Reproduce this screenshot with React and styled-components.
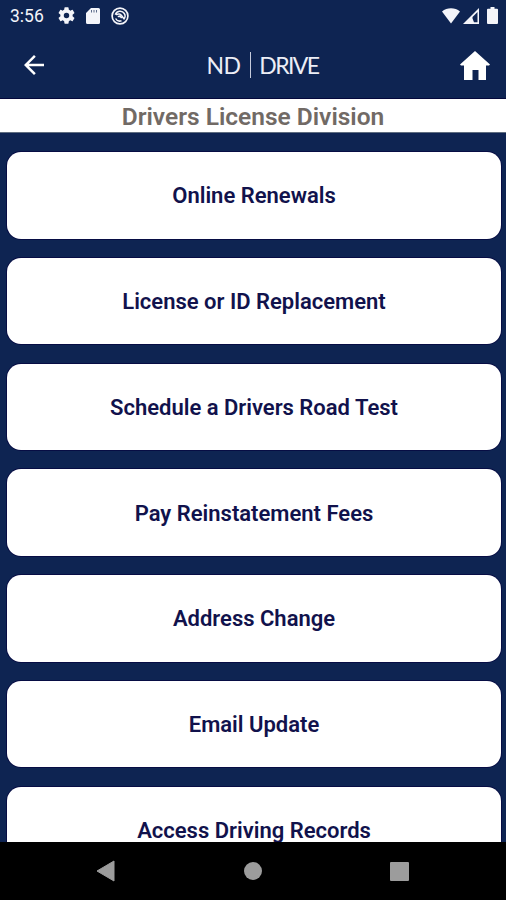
import React from 'react';
import styled, { createGlobalStyle } from 'styled-components';

const navy = '#0e2452';

const GlobalStyle = createGlobalStyle`
  body {
    margin: 0;
    background: #000;
  }
`;

const Screen = styled.div`
  display: flex;
  flex-direction: column;
  height: 900px;
  overflow: hidden;
  background: ${navy};
  font-family: Roboto, sans-serif;
`;

const StatusBar = styled.div`
  display: flex;
  align-items: center;
  flex: none;
  box-sizing: border-box;
  height: 31px;
  padding: 0 8px 0 10px;
  color: #f4f5fa;
`;

const Clock = styled.span`
  width: 48px;
  padding-top: 2px;
  font-size: 17.5px;
  line-height: 29px;
`;

const StatusIcons = styled.div`
  display: flex;
  align-items: center;
  gap: 11px;
`;

const SignalIcons = styled(StatusIcons)`
  gap: 3px;
  margin-left: auto;
`;

const Icon = styled.svg`
  display: block;
  flex: none;
  fill: currentColor;
`;

const BatteryIcon = styled(Icon)`
  margin-left: 5px;
`;

const Header = styled.header`
  display: grid;
  grid-template-columns: 1fr auto 1fr;
  align-items: center;
  flex: none;
  box-sizing: border-box;
  height: 67px;
  padding: 0 16px 0 24px;
  color: #fff;
`;

const HeaderButton = styled.button`
  justify-self: ${props => props.$side};
  padding: 0;
  border: 0;
  background: none;
  color: #fff;
`;

const HomeButton = styled(HeaderButton)`
  padding-top: 2px;
`;

const Brand = styled.div`
  display: flex;
  align-items: center;
  padding-left: 11px;
  color: #eceef6;
  font-family: Lato, sans-serif;
  font-size: 23px;
  line-height: 30px;
  letter-spacing: -0.6px;
`;

const BrandRule = styled.span`
  width: 1px;
  height: 26px;
  margin: 0 8px 0 10px;
  background: #c5cadb;
`;

const BrandName = styled.span`
  letter-spacing: -1.6px;
`;

const PageTitle = styled.h1`
  flex: none;
  box-sizing: border-box;
  height: 35px;
  margin: 0;
  border-top: 1px solid #04083c;
  border-bottom: 1px solid #5f6d80;
  background: #fff;
  color: #716a65;
  font-size: 24.5px;
  font-weight: 600;
  line-height: 36px;
  text-align: center;
`;

const Menu = styled.main`
  display: flex;
  flex-direction: column;
  flex: 1;
  gap: 19.3px;
  min-height: 0;
  padding: 19px 5px 0 7px;
  overflow: hidden;
`;

const MenuButton = styled.button`
  flex: none;
  box-sizing: border-box;
  height: 86.5px;
  padding: 2px 0 0;
  border: 0;
  border-radius: 14px;
  background: #fff;
  box-shadow: 0 0 0 1px #070d44;
  color: #11124c;
  font-family: inherit;
  font-size: 22px;
  font-weight: 600;
  line-height: 30px;
`;

const NavBar = styled.nav`
  display: flex;
  align-items: center;
  justify-content: space-between;
  flex: none;
  box-sizing: border-box;
  height: 58px;
  padding: 0 97px 0 96px;
  background: #000;
  color: #9c9c9c;
`;

const items = [
  'Online Renewals',
  'License or ID Replacement',
  'Schedule a Drivers Road Test',
  'Pay Reinstatement Fees',
  'Address Change',
  'Email Update',
  'Access Driving Records',
];

const App = () => (
  <Screen>
    <GlobalStyle />
    <StatusBar>
      <Clock>3:56</Clock>
      <StatusIcons>
        <Icon width="17" height="17" viewBox="2 2 20 20">
          <path d="M19.14 12.94c.04-.3.06-.61.06-.94s-.02-.64-.07-.94l2.03-1.58a.49.49 0 0 0 .12-.61l-1.92-3.32a.49.49 0 0 0-.59-.22l-2.39.96a7 7 0 0 0-1.62-.94l-.36-2.54a.48.48 0 0 0-.48-.41h-3.84a.48.48 0 0 0-.47.41l-.36 2.54a7.3 7.3 0 0 0-1.62.94l-2.39-.96a.48.48 0 0 0-.59.22L2.74 8.87a.48.48 0 0 0 .12.61l2.03 1.58a6 6 0 0 0-.02 1.88l-2.03 1.58a.49.49 0 0 0-.12.61l1.92 3.32c.12.22.37.29.59.22l2.39-.96c.5.38 1.03.7 1.62.94l.36 2.54c.05.24.24.41.48.41h3.84c.24 0 .44-.17.47-.41l.36-2.54a7 7 0 0 0 1.62-.94l2.39.96c.22.08.47 0 .59-.22l1.92-3.32a.48.48 0 0 0-.12-.61zM12 15.2a3.2 3.2 0 1 1 0-6.4 3.2 3.2 0 0 1 0 6.4z" />
        </Icon>
        <Icon width="14" height="16" viewBox="0 0 14 16">
          <path d="M5 0h7.5A1.5 1.5 0 0 1 14 1.5v13a1.5 1.5 0 0 1-1.5 1.5h-11A1.5 1.5 0 0 1 0 14.5V5z" />
          <path d="M5.5 2v2.5M8 2v2.5M10.5 2v2.5" stroke={navy} strokeOpacity="0.65" />
        </Icon>
        <Icon width="18" height="18" viewBox="0 0 18 18">
          <circle cx="9" cy="9" r="7.9" fill="none" stroke="currentColor" strokeWidth="1.7" />
          <path
            d="M4.3 7.8C5.5 3.8 11 2.9 13.3 6.5c1.2 2 .7 4.5-.7 6M4.6 11.5c1.2 2.3 3.700 3 5.900 2.3M5.2 7.8c2.5-1.5 4.5-.8 5.5 1l2.200 3"
            fill="none"
            stroke="currentColor"
            strokeWidth="1.5"
          />
          <path d="M6.5 9l3-1 2 2.8-1.500.8-1-1.300H7z" />
        </Icon>
      </StatusIcons>
      <SignalIcons>
        <Icon width="18" height="16" viewBox="0 0 18 16">
          <path d="M0 3.5C5-.9 13-.9 18 3.5L9 15.5z" />
        </Icon>
        <Icon width="16" height="16" viewBox="0 0 16 16">
          <path fillRule="evenodd" d="M16 0v16H0zM14.5 4l-5 5v1.5l1.5 3.700h3.5z" />
        </Icon>
        <BatteryIcon width="11" height="17" viewBox="0 0 11 17">
          <path d="M3.5 0h4v1.7H10a1 1 0 0 1 1 1V16a1 1 0 0 1-1 1H1a1 1 0 0 1-1-1V2.7a1 1 0 0 1 1-1h2.5z" />
        </BatteryIcon>
      </SignalIcons>
    </StatusBar>
    <Header>
      <HeaderButton $side="start" aria-label="Back">
        <Icon width="20" height="20" viewBox="4 4 16 16">
          <path d="M20 11H7.83l5.59-5.59L12 4l-8 8 8 8 1.41-1.41L7.83 13H20z" />
        </Icon>
      </HeaderButton>
      <Brand>
        ND
        <BrandRule />
        <BrandName>DRIVE</BrandName>
      </Brand>
      <HomeButton $side="end" aria-label="Home">
        <Icon width="30" height="29" viewBox="0 0 30 29">
          <path d="M15 0l15 13.5-1 1h-3V29h-7.5V19h-6v10H4V14.5H1l-1-1z" />
        </Icon>
      </HomeButton>
    </Header>
    <PageTitle>Drivers License Division</PageTitle>
    <Menu>
      {items.map(item => (
        <MenuButton key={item}>{item}</MenuButton>
      ))}
    </Menu>
    <NavBar>
      <Icon width="19" height="22" viewBox="0 0 19 22">
        <path d="M18 1v20L1 11z" stroke="currentColor" strokeLinejoin="round" />
      </Icon>
      <Icon width="18" height="18" viewBox="0 0 18 18">
        <circle cx="9" cy="9" r="9" />
      </Icon>
      <Icon width="19" height="19" viewBox="0 0 19 19">
        <rect width="19" height="19" rx="1" />
      </Icon>
    </NavBar>
  </Screen>
);

export default App;
